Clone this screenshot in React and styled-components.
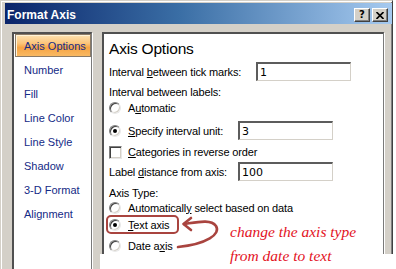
import React from "react";
import styled, { createGlobalStyle } from "styled-components";

const Global = createGlobalStyle`
  html, body { margin: 0; padding: 0; background: #fff; overflow: hidden; }
  #root { width: 396px; height: 269px; }
`;

const Stage = styled.div`
  position: relative;
  width: 396px;
  height: 269px;
  overflow: hidden;
  font-family: "Liberation Sans", Arial, sans-serif;
`;

const Dialog = styled.div`
  box-sizing: border-box;
  width: 393px;
  height: 300px;
  background: #d4d0c8;
  border-style: solid;
  border-width: 1px 1px 0 1px;
  border-color: #d4d0c8 #404040 #404040 #d4d0c8;
  box-shadow: inset 1px 1px 0 #fff, inset -1px 0 0 #808080;
  padding: 2px 0 0 4px;
  display: flex;
  flex-direction: column;
`;

const TitleBar = styled.div`
  box-sizing: border-box;
  height: 21px;
  display: flex;
  align-items: center;
  padding: 3px 4px 0 2px;
  background: linear-gradient(to right, #0a246a 0%, #3a6ea5 45%, #a6caf0 100%);
`;

const Title = styled.div`
  flex: 1;
  color: #fff;
  font-weight: bold;
  font-size: 12px;
`;

const CaptionButton = styled.div`
  box-sizing: border-box;
  width: 16px;
  height: 14px;
  margin-left: 2px;
  background: #d4d0c8;
  border-style: solid;
  border-width: 1px;
  border-color: #fff #404040 #404040 #fff;
  box-shadow: inset -1px -1px 0 #808080;
  display: flex;
  align-items: center;
  justify-content: center;
  font-family: "DejaVu Sans", sans-serif;
  font-weight: bold;
  font-size: 10px;
  color: #000;
  line-height: 1;
`;

const Body = styled.div`
  display: flex;
  align-items: flex-start;
  padding: 8px 8px 0 7px;
`;

const Sunken = styled.div`
  box-sizing: border-box;
  background: #fff;
  border-style: solid;
  border-width: 2px 1px 1px 2px;
  border-color: #505050 #7a7a7a #7a7a7a #505050;
  box-shadow: 1px 1px 0 #fff;
  height: 250px;
`;

const NavPanel = styled(Sunken)`
  width: 80px;
  display: flex;
  flex-direction: column;
`;

const NavItem = styled.div`
  box-sizing: border-box;
  height: ${(p) => (p.$active ? 23 : 24)}px;
  margin: ${(p) => (p.$active ? "0 0 1px 1px" : "0")};
  display: flex;
  align-items: center;
  padding-left: ${(p) => (p.$active ? 8 : 10)}px;
  font-size: 11px;
  color: #142a86;
  white-space: nowrap;
  ${(p) =>
    p.$active &&
    `
    border: 1px solid #8a7a66;
    box-shadow: inset 1px 1px 0 #fff3d8;
    background: linear-gradient(#fde2b2 0%, #fbc47a 40%, #f7a443 60%, #f9b963 100%);
  `}
`;

const OptionsPanel = styled(Sunken)`
  width: 282px;
  margin-left: 10px;
  padding-left: 5px;
  display: flex;
  flex-direction: column;
  align-items: flex-start;
  font-size: 11px;
  letter-spacing: -0.15px;
  color: #000;
`;

const Heading = styled.div`
  margin-top: 5px;
  height: 20px;
  line-height: 20px;
  font-size: 15.5px;
  letter-spacing: -0.2px;
`;

const Row = styled.div`
  display: flex;
  align-items: center;
  height: ${(p) => p.$h || 16}px;
  margin-top: ${(p) => p.$mt || 0}px;
  white-space: nowrap;
`;

const Label = styled.span`
  display: inline-block;
  width: ${(p) => (p.$w ? `${p.$w}px` : "auto")};
`;

const Field = styled.div`
  box-sizing: border-box;
  width: 95px;
  height: 19px;
  border-style: solid;
  border-width: 2px 1px 1px 2px;
  border-color: #5c5c5c #d4d0c8 #d4d0c8 #5c5c5c;
  background: #fff;
  padding-left: 2px;
  display: flex;
  align-items: center;
  font-family: "DejaVu Sans", sans-serif;
  font-size: 11px;
  letter-spacing: 0;
  color: #000;
`;

const Radio = styled.span`
  box-sizing: border-box;
  position: relative;
  width: 12px;
  height: 12px;
  margin-right: 7px;
  border-radius: 50%;
  background: #fff;
  border: 1px solid;
  border-color: #808080 #e8e8e8 #e8e8e8 #808080;
  box-shadow: inset 1px 1px 0 #404040, inset -1px -1px 0 #d4d0c8;
  flex: none;
  &::after {
    content: "";
    display: ${(p) => (p.$checked ? "block" : "none")};
    position: absolute;
    left: 3px;
    top: 3px;
    width: 4px;
    height: 4px;
    border-radius: 50%;
    background: #000;
  }
`;

const Check = styled.span`
  box-sizing: border-box;
  width: 13px;
  height: 13px;
  margin-right: 6px;
  background: #fff;
  border: 1px solid;
  border-color: #808080 #e8e8e8 #e8e8e8 #808080;
  box-shadow: inset 1px 1px 0 #404040, inset -1px -1px 0 #d4d0c8;
  flex: none;
`;

const Highlight = styled(Row)`
  box-sizing: border-box;
  margin-left: -3px;
  padding: 0 8px 0 1px;
  border: 2px solid #a9443f;
  border-radius: 5px;
`;

const Mask = styled.div`
  position: absolute;
  left: 100px;
  right: 0;
  top: 254px;
  bottom: 0;
  background: #fff;
`;

const Note = styled.div`
  position: absolute;
  left: 230px;
  top: 220px;
  color: #e3121e;
  font-family: "Liberation Serif", "Times New Roman", serif;
  font-style: italic;
  font-size: 15.5px;
  line-height: 24px;
  white-space: nowrap;
`;

const Overlay = styled.svg`
  position: absolute;
  left: 0;
  top: 0;
  pointer-events: none;
`;

const navItems = [
  "Axis Options",
  "Number",
  "Fill",
  "Line Color",
  "Line Style",
  "Shadow",
  "3-D Format",
  "Alignment",
];

export default function App() {
  return (
    <Stage>
      <Global />
      <Dialog>
        <TitleBar>
          <Title>Format Axis</Title>
          <CaptionButton>?</CaptionButton>
          <CaptionButton>
            <svg width="8" height="7" viewBox="0 0 8 7">
              <path d="M0.5 0 L7.5 7 M7.5 0 L0.5 7" stroke="#000" strokeWidth="1.6" />
            </svg>
          </CaptionButton>
        </TitleBar>
        <Body>
          <NavPanel>
            {navItems.map((t, i) => (
              <NavItem key={t} $active={i === 0}>
                {t}
              </NavItem>
            ))}
          </NavPanel>
          <OptionsPanel>
            <Heading>Axis Options</Heading>
            <Row $h={19} $mt={3}>
              <Label $w={147}>
                Interval <u>b</u>etween tick marks:
              </Label>
              <Field>1</Field>
            </Row>
            <Row $mt={3}>Interval between labels:</Row>
            <Row>
              <Radio />
              <span>
                A<u>u</u>tomatic
              </span>
            </Row>
            <Row $h={19} $mt={5}>
              <Label $w={129}>
                <Row as="span">
                  <Radio $checked />
                  <span>
                    <u>S</u>pecify interval unit:
                  </span>
                </Row>
              </Label>
              <Field>3</Field>
            </Row>
            <Row $mt={4}>
              <Check />
              <span>
                <u>C</u>ategories in reverse order
              </span>
            </Row>
            <Row $h={19} $mt={2}>
              <Label $w={129}>
                Label <u>d</u>istance from axis:
              </Label>
              <Field>100</Field>
            </Row>
            <Row $h={14} $mt={5}>
              Axis Type:
            </Row>
            <Row $h={15}>
              <Radio />
              <span>
                Automaticall<u>y</u> select based on data
              </span>
            </Row>
            <Highlight $h={19}>
              <Radio $checked />
              <span>
                <u>T</u>ext axis
              </span>
            </Highlight>
            <Row $mt={4}>
              <Radio />
              <span>
                Date a<u>x</u>is
              </span>
            </Row>
          </OptionsPanel>
        </Body>
      </Dialog>
      <Mask />
      <Overlay width="396" height="269" viewBox="0 0 396 269">
        <g fill="none" stroke="#a9443f" strokeWidth="2.6" strokeLinecap="round" strokeLinejoin="round">
          <path d="M184 224 C198 222 211 219 216 226 C221 234 207 244 178 247" />
          <path d="M191 218 L183.5 224 L191 230" />
        </g>
      </Overlay>
      <Note>
        change the axis type
        <br />
        from date to text
      </Note>
    </Stage>
  );
}
